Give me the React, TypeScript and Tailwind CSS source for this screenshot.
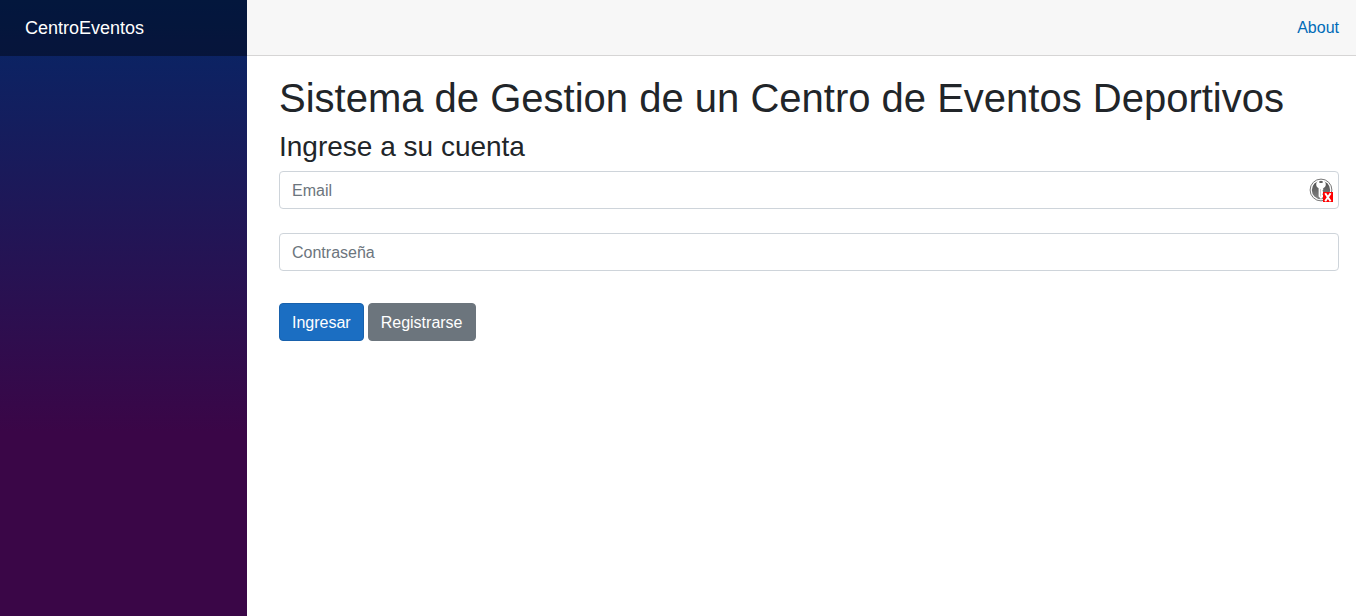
import { useState } from "react";

function KeyBadge() {
  return (
    <svg viewBox="0 0 24 24" className="size-6" aria-hidden="true">
      <defs>
        <linearGradient id="disc" x1="0" y1="0" x2="0" y2="1">
          <stop offset="0" stopColor="#4c4c4c" />
          <stop offset="1" stopColor="#858585" />
        </linearGradient>
      </defs>
      <circle cx="12" cy="12" r="10.9" fill="#fff" stroke="#777" strokeWidth="1" />
      <circle cx="12" cy="12" r="9.2" fill="url(#disc)" />
      <path
        d="M9.4 2.6C7.9 3.600 7.200 5 7.200 6.500c0 1.700.9 2.900 2.400 3.700V18.600L12 21l2.200-2.200v-1.600l-1-1 1-1.100v-1.400l-.8-.9.800-.9V10.200c1.600-.8 2.600-2 2.600-3.700 0-1.500-.7-2.900-2.200-3.900z"
        fill="#fff"
      />
      <ellipse cx="12" cy="4" rx="2" ry="1.100" fill="#555" />
      <path d="M11.500 11v7.500" stroke="#aaa" strokeWidth=".6" />
      <rect x="14" y="14" width="10" height="10" fill="#f00" />
      <path d="M16.200 15.200l5.400 8M21.600 15.200l-5.400 8" stroke="#fff" strokeWidth="2" />
    </svg>
  );
}

const field =
  "block h-[38px] w-full rounded border border-[#ced4da] bg-white px-3 pt-0.5 text-base text-[#212529] placeholder:text-[#6c757d]";
const button = "h-[38px] rounded border px-3 pt-0.5 text-base text-white";

export default function App() {
  const [email, setEmail] = useState("");
  const [password, setPassword] = useState("");

  return (
    <div className="flex min-h-screen bg-white font-['Liberation_Sans',Arial,sans-serif] text-[#212529]">
      <aside className="sticky top-0 h-screen w-[247px] shrink-0 bg-[linear-gradient(180deg,rgb(5,39,103)_0%,#3a0647_70%)]">
        <div className="flex h-14 items-center bg-black/40 px-[25px]">
          <a href="#inicio" className="text-lg text-white">
            CentroEventos
          </a>
        </div>
      </aside>
      <main className="min-w-0 flex-1">
        <header className="flex h-14 items-center justify-end border-b border-[#d6d5d5] bg-[#f7f7f7] px-[17px]">
          <a href="#about" className="text-base text-[#006bb7]">
            About
          </a>
        </header>
        <article className="pt-[18px] pr-[17px] pl-8">
          <h1 className="mb-2 text-[40px] leading-[48px]">
            Sistema de Gestion de un Centro de Eventos Deportivos
          </h1>
          <h3 className="mb-2 text-[28px] leading-[33px]">Ingrese a su cuenta</h3>
          <form onSubmit={(e) => e.preventDefault()}>
            <div className="relative mb-6">
              <input
                type="email"
                aria-label="Email"
                placeholder="Email"
                className={field}
                value={email}
                onChange={(e) => setEmail(e.target.value)}
              />
              <span className="absolute inset-y-0 right-[6px] flex items-center">
                <KeyBadge />
              </span>
            </div>
            <input
              type="password"
              aria-label="Contraseña"
              placeholder="Contraseña"
              className={field}
              value={password}
              onChange={(e) => setPassword(e.target.value)}
            />
            <div className="mt-8 flex gap-1">
              <button type="submit" className={`${button} border-[#1861ac] bg-[#1b6ec2]`}>
                Ingresar
              </button>
              <button type="button" className={`${button} border-[#6c757d] bg-[#6c757d]`}>
                Registrarse
              </button>
            </div>
          </form>
        </article>
      </main>
    </div>
  );
}
